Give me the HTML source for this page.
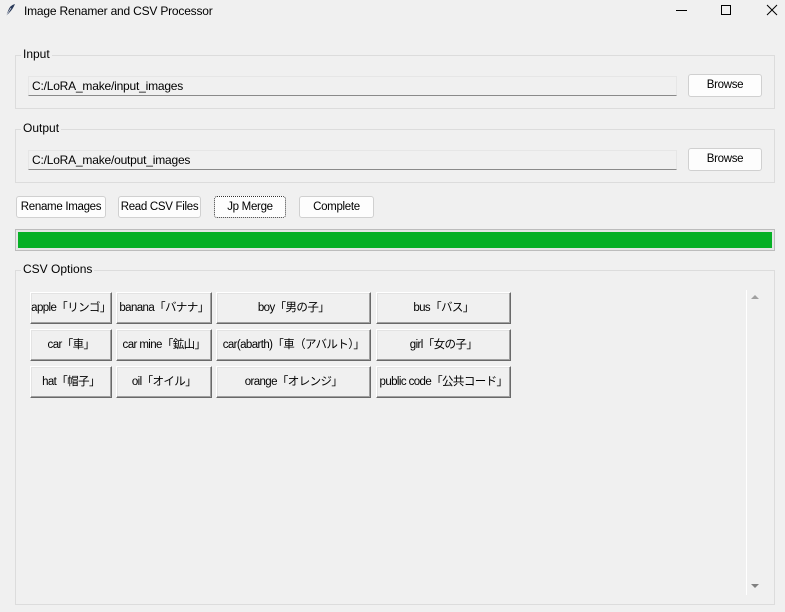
<!DOCTYPE html>
<html><head><meta charset="utf-8"><style>
*{box-sizing:border-box;margin:0;padding:0}
body{width:785px;height:612px;background:#f0f0f0;font-family:"Liberation Sans","Noto Sans CJK JP",sans-serif;font-size:12px;color:#000;position:relative;overflow:hidden}
.a{position:absolute;white-space:nowrap}
.frame{position:absolute;border:1px solid #dcdcdc}
.lbl{position:absolute;background:#f0f0f0;padding:0 2px;font-size:12px;line-height:14px}
.entry{position:absolute;background:#f0f0f0;border:1px solid #e6e6e6;border-bottom:1px solid #8a8a8a;font-size:12px;line-height:18px;padding-left:3px;white-space:nowrap;letter-spacing:-0.2px}
.btn{position:absolute;background:#fdfdfd;border:1px solid #d0d0d0;border-radius:3px;text-align:center;font-size:11.5px;line-height:20px;white-space:nowrap;letter-spacing:-0.3px;overflow:hidden}
.rb{position:absolute;background:#f0f0f0;border:1px solid;border-color:#fff #696969 #696969 #fff;box-shadow:inset -1px -1px 0 #a0a0a0,inset 1px 1px 0 #e3e3e3;text-align:center;font-size:11.5px;line-height:30px;white-space:nowrap;letter-spacing:-0.6px;overflow:hidden}
</style></head><body>
<svg class="a" style="left:4px;top:3px" width="12" height="14" viewBox="0 0 12 14"><path d="M2 13 L4 8 Q6 2 11 1 Q9 6 5 10 Z" fill="#2a3a5a"/><path d="M2 13 L7 5" stroke="#fff" stroke-width=".6"/></svg>
<div class="a" style="left:24px;top:3px;font-size:12px;line-height:16px;letter-spacing:-0.2px">Image Renamer and CSV Processor</div>
<div class="a" style="left:676px;top:10px;width:11px;height:1px;background:#000"></div>
<div class="a" style="left:721px;top:5px;width:10px;height:10px;border:1px solid #000"></div>
<svg class="a" style="left:766px;top:4px" width="12" height="12"><path d="M1 1L11 11M11 1L1 11" stroke="#000" stroke-width="1"/></svg>

<div class="frame" style="left:15px;top:55px;width:760px;height:54px"></div>
<div class="lbl" style="left:21px;top:47px">Input</div>
<div class="entry" style="left:28px;top:76px;width:649px;height:20px">C:/LoRA_make/input_images</div>
<div class="btn" style="left:688px;top:74px;width:74px;height:23px">Browse</div>

<div class="frame" style="left:15px;top:129px;width:760px;height:54px"></div>
<div class="lbl" style="left:21px;top:121px">Output</div>
<div class="entry" style="left:28px;top:150px;width:649px;height:20px">C:/LoRA_make/output_images</div>
<div class="btn" style="left:688px;top:148px;width:74px;height:23px">Browse</div>

<div class="btn" style="left:16px;top:196px;width:90px;height:22px">Rename Images</div>
<div class="btn" style="left:118px;top:196px;width:83px;height:22px">Read CSV Files</div>
<div class="btn" style="left:214px;top:196px;width:72px;height:22px;border:1px dotted #333">Jp Merge</div>
<div class="btn" style="left:299px;top:196px;width:75px;height:22px">Complete</div>

<div class="a" style="left:15px;top:229px;width:760px;height:22px;border:1px solid #bcbcbc;background:#e6e6e6"></div>
<div class="a" style="left:18px;top:232px;width:754px;height:16px;background:#06b025"></div>

<div class="frame" style="left:15px;top:270px;width:760px;height:335px"></div>
<div class="lbl" style="left:21px;top:262px">CSV Options</div>
<div class="a" style="left:746px;top:290px;width:1px;height:305px;background:#fff"></div>
<svg class="a" style="left:750px;top:293px" width="10" height="8"><path d="M1 6L5 2L9 6Z" fill="#a0a0a0"/></svg>
<svg class="a" style="left:750px;top:582px" width="10" height="8"><path d="M1 2L5 6L9 2Z" fill="#808080"/></svg>

<div class="rb" style="left:30px;top:292px;width:82px;height:32px">apple「リンゴ」</div>
<div class="rb" style="left:116px;top:292px;width:96px;height:32px">banana「バナナ」</div>
<div class="rb" style="left:216px;top:292px;width:155px;height:32px">boy「男の子」</div>
<div class="rb" style="left:376px;top:292px;width:135px;height:32px">bus「バス」</div>
<div class="rb" style="left:30px;top:329px;width:82px;height:32px">car「車」</div>
<div class="rb" style="left:116px;top:329px;width:96px;height:32px">car mine「鉱山」</div>
<div class="rb" style="left:216px;top:329px;width:155px;height:32px">car(abarth)「車（アバルト）」</div>
<div class="rb" style="left:376px;top:329px;width:135px;height:32px">girl「女の子」</div>
<div class="rb" style="left:30px;top:366px;width:82px;height:32px">hat「帽子」</div>
<div class="rb" style="left:116px;top:366px;width:96px;height:32px">oil「オイル」</div>
<div class="rb" style="left:216px;top:366px;width:155px;height:32px">orange「オレンジ」</div>
<div class="rb" style="left:376px;top:366px;width:135px;height:32px">public code「公共コード」</div>
</body></html>
